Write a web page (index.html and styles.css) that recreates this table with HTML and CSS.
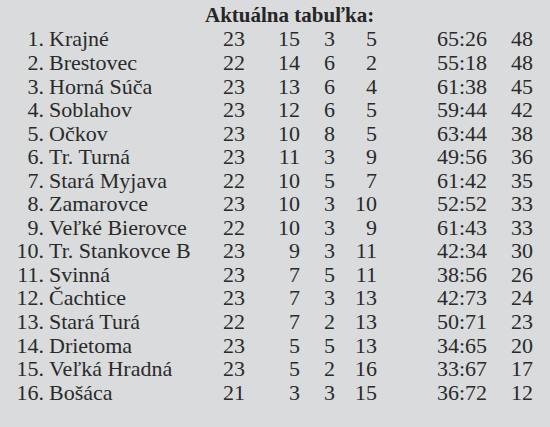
FILE: index.html
```html
<!DOCTYPE html>
<html>
<head>
<meta charset="utf-8">
<link rel="stylesheet" href="styles.css">
</head>
<body>
<div class="page">
  <p class="title">Aktuálna tabuľka:</p>
  <div class="table">
    <div class="row"><span class="pos">1.</span><span class="team">Krajné</span><span class="n">23</span><span class="w">15</span><span class="d">3</span><span class="l">5</span><span class="score">65:26</span><span class="pts">48</span></div>
    <div class="row"><span class="pos">2.</span><span class="team">Brestovec</span><span class="n">22</span><span class="w">14</span><span class="d">6</span><span class="l">2</span><span class="score">55:18</span><span class="pts">48</span></div>
    <div class="row"><span class="pos">3.</span><span class="team">Horná Súča</span><span class="n">23</span><span class="w">13</span><span class="d">6</span><span class="l">4</span><span class="score">61:38</span><span class="pts">45</span></div>
    <div class="row"><span class="pos">4.</span><span class="team">Soblahov</span><span class="n">23</span><span class="w">12</span><span class="d">6</span><span class="l">5</span><span class="score">59:44</span><span class="pts">42</span></div>
    <div class="row"><span class="pos">5.</span><span class="team">Očkov</span><span class="n">23</span><span class="w">10</span><span class="d">8</span><span class="l">5</span><span class="score">63:44</span><span class="pts">38</span></div>
    <div class="row"><span class="pos">6.</span><span class="team">Tr. Turná</span><span class="n">23</span><span class="w">11</span><span class="d">3</span><span class="l">9</span><span class="score">49:56</span><span class="pts">36</span></div>
    <div class="row"><span class="pos">7.</span><span class="team">Stará Myjava</span><span class="n">22</span><span class="w">10</span><span class="d">5</span><span class="l">7</span><span class="score">61:42</span><span class="pts">35</span></div>
    <div class="row"><span class="pos">8.</span><span class="team">Zamarovce</span><span class="n">23</span><span class="w">10</span><span class="d">3</span><span class="l">10</span><span class="score">52:52</span><span class="pts">33</span></div>
    <div class="row"><span class="pos">9.</span><span class="team">Veľké Bierovce</span><span class="n">22</span><span class="w">10</span><span class="d">3</span><span class="l">9</span><span class="score">61:43</span><span class="pts">33</span></div>
    <div class="row"><span class="pos">10.</span><span class="team">Tr. Stankovce B</span><span class="n">23</span><span class="w">9</span><span class="d">3</span><span class="l">11</span><span class="score">42:34</span><span class="pts">30</span></div>
    <div class="row"><span class="pos">11.</span><span class="team">Svinná</span><span class="n">23</span><span class="w">7</span><span class="d">5</span><span class="l">11</span><span class="score">38:56</span><span class="pts">26</span></div>
    <div class="row"><span class="pos">12.</span><span class="team">Čachtice</span><span class="n">23</span><span class="w">7</span><span class="d">3</span><span class="l">13</span><span class="score">42:73</span><span class="pts">24</span></div>
    <div class="row"><span class="pos">13.</span><span class="team">Stará Turá</span><span class="n">22</span><span class="w">7</span><span class="d">2</span><span class="l">13</span><span class="score">50:71</span><span class="pts">23</span></div>
    <div class="row"><span class="pos">14.</span><span class="team">Drietoma</span><span class="n">23</span><span class="w">5</span><span class="d">5</span><span class="l">13</span><span class="score">34:65</span><span class="pts">20</span></div>
    <div class="row"><span class="pos">15.</span><span class="team">Veľká Hradná</span><span class="n">23</span><span class="w">5</span><span class="d">2</span><span class="l">16</span><span class="score">33:67</span><span class="pts">17</span></div>
    <div class="row"><span class="pos">16.</span><span class="team">Bošáca</span><span class="n">21</span><span class="w">3</span><span class="d">3</span><span class="l">15</span><span class="score">36:72</span><span class="pts">12</span></div>
  </div>
</div>
</body>
</html>
```
FILE: styles.css
```css
body {
  margin: 0;
  background: #d9dbdc;
  color: #2a2a2a;
  font-family: "Liberation Serif", serif;
}

.page {
  padding-top: 4px;
}

.title {
  margin: 0 0 0 205px;
  font-size: 21px;
  font-weight: bold;
  line-height: 23.4px;
  color: #262626;
}

.table {
  display: flex;
  flex-direction: column;
}

.row {
  display: grid;
  grid-template-columns: 44px 168px 33px 55px 35px 42px 110px 46px;
  font-size: 22px;
  line-height: 23.55px;
  white-space: nowrap;
}

.row span {
  text-align: right;
}

.row .team {
  text-align: left;
  padding-left: 5px;
}
```
